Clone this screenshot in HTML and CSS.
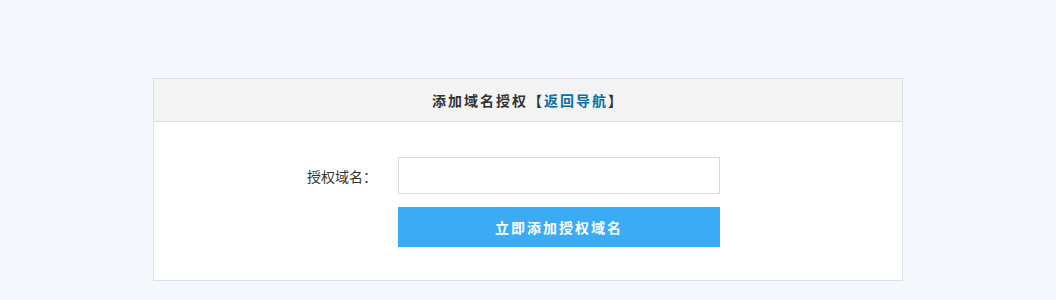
FILE: index.html
```html
<!DOCTYPE html>
<html lang="zh-CN">
   <head>
      <meta charset="UTF-8">
      <meta name="viewport" content="width=device-width, initial-scale=1.0">
      <title>添加域名授权</title>
      <link rel="stylesheet" href="styles.css">
   </head>

   <body>
      <div class="page">
         <div class="panel">
            <!-------------------TITLE------------------->
            <div class="panel-head">
               添加域名授权【<a href="#" class="back-link">返回导航</a>】
            </div>

            <!-------------------FORM-------------------->
            <form class="panel-body" onsubmit="return false;">
               <label class="field-label" for="domain">授权域名：</label>
               <input type="text" id="domain" class="field-input">
               <span></span>
               <button type="submit" class="submit-btn">立即添加授权域名</button>
            </form>
         </div>
      </div>
   </body>
</html>
```

FILE: styles.css
```css
*{
   box-sizing: border-box;
   margin: 0;
   padding: 0;
}

body{
   background: #f4f8fd;
   font-family: "Noto Sans CJK SC", "Liberation Sans", sans-serif;
   font-size: 14px;
   color: #333;
}

.page{
   padding-top: 78px;
}

.panel{
   width: 750px;
   margin: 0 auto;
   background: #fff;
   border: 1px solid #dcdfe3;
}

.panel-head{
   height: 43px;
   line-height: 42px;
   background: #f3f3f3;
   border-bottom: 1px solid #dcdfe3;
   text-align: center;
   font-weight: bold;
   letter-spacing: 2px;
   color: #333;
}

.back-link{
   color: #0b6fa6;
   text-decoration: none;
}

.panel-body{
   display: grid;
   grid-template-columns: 244px 322px;
   row-gap: 13px;
   padding: 35px 0 33px;
}

.field-label{
   align-self: center;
   text-align: right;
   padding-right: 21px;
   color: #333;
}

.field-input{
   height: 37px;
   border: 1px solid #d9d9d9;
   padding: 0 8px;
   font-size: 14px;
   outline: none;
}

.submit-btn{
   height: 40px;
   border: none;
   background: #3aabf4;
   color: #fff;
   font-family: inherit;
   font-size: 14px;
   font-weight: bold;
   letter-spacing: 2px;
   cursor: pointer;
}

.submit-btn:hover{
   background: #2b9de8;
}
```
